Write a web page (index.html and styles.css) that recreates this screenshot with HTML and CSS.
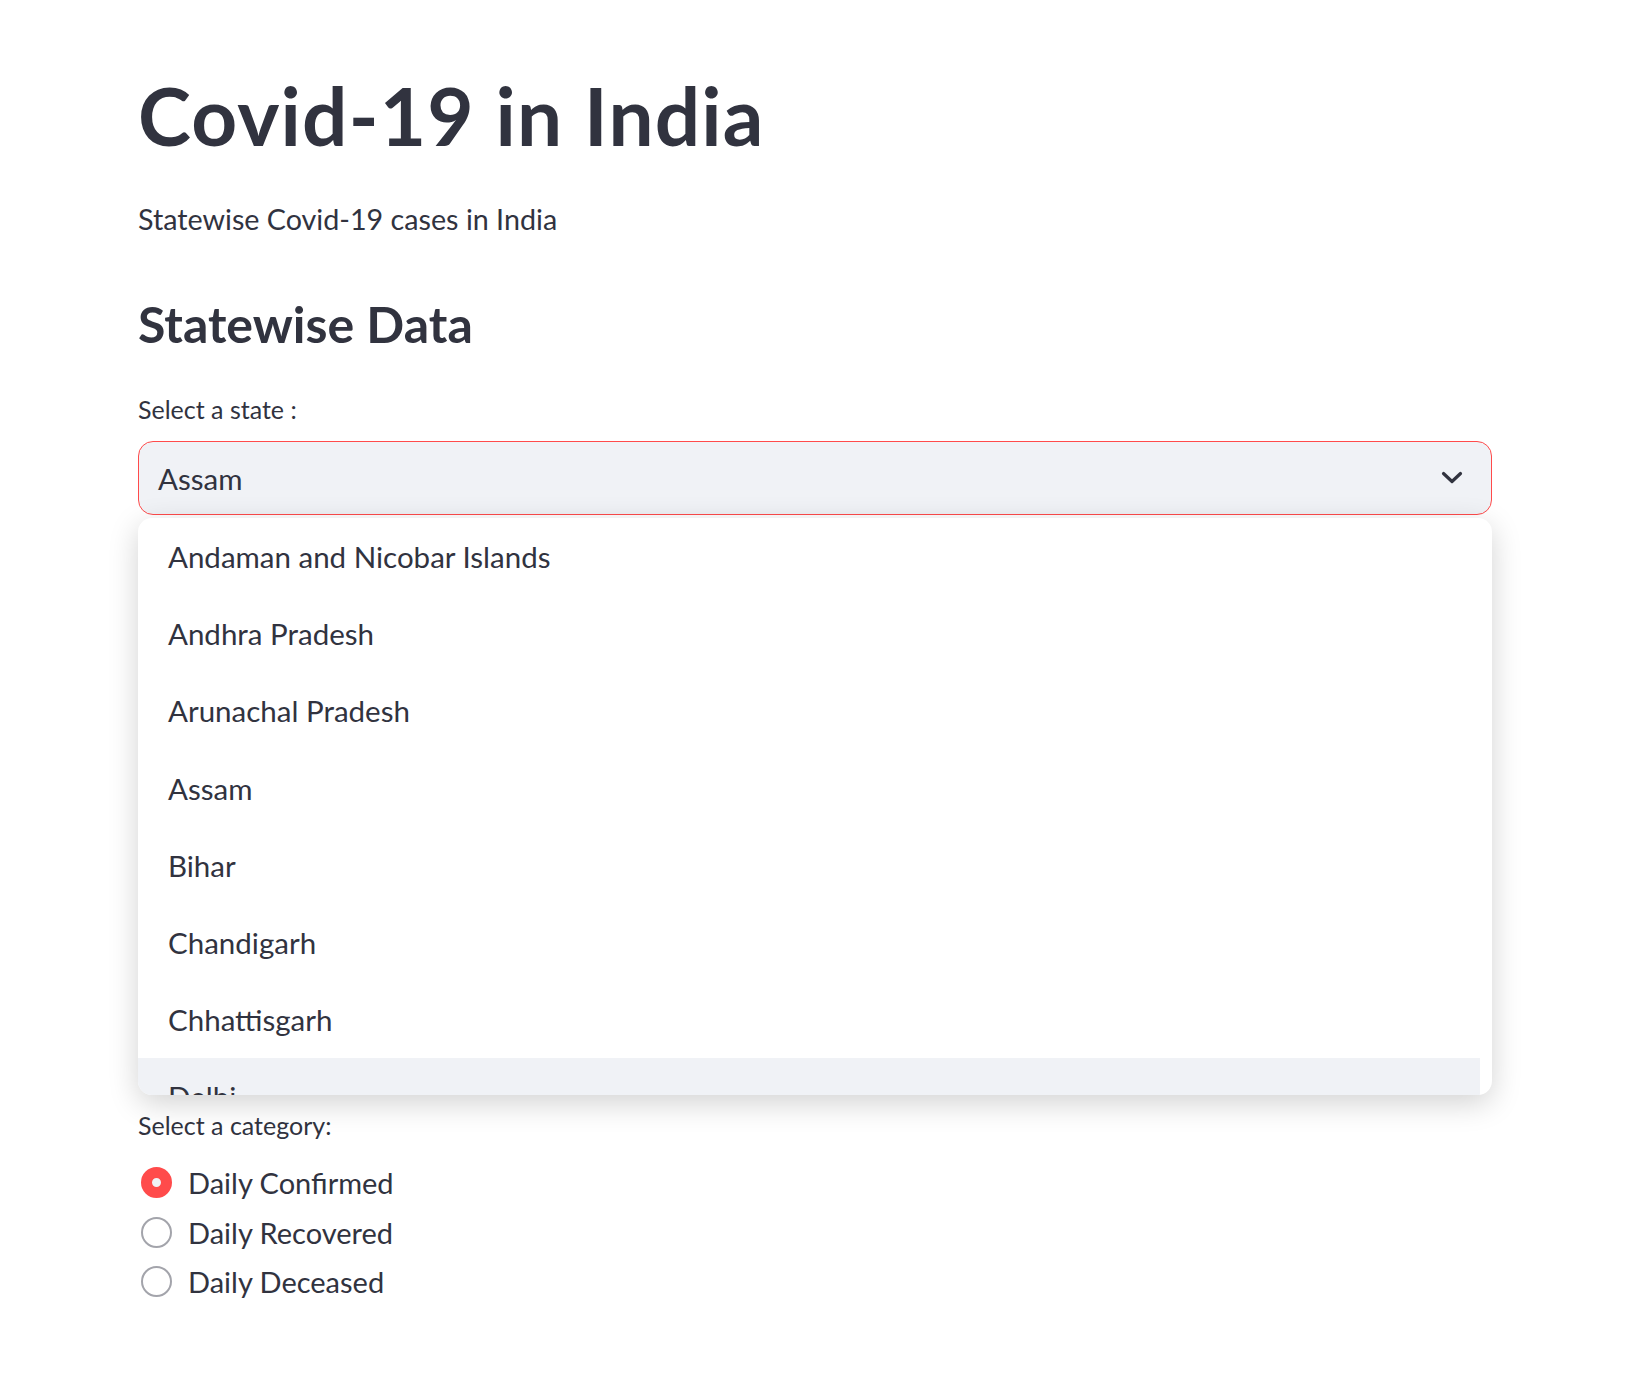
FILE: index.html
```html
<!DOCTYPE html>
<html lang="en">
<head>
<meta charset="utf-8">
<title>Covid-19 in India</title>
<link rel="stylesheet" href="styles.css">
</head>
<body>
<main class="block">
  <h1 class="title">Covid-19 in India</h1>
  <p class="subtitle">Statewise Covid-19 cases in India</p>
  <h3 class="subheader">Statewise Data</h3>

  <div class="widget">
    <label class="wlabel">Select a state :</label>
    <div class="select-wrap">
      <div class="select">
        <span class="select-value">Assam</span>
        <svg class="chevron" width="24" height="14" viewBox="0 0 24 14"><path d="M3.5 2.5 L12 10.5 L20.5 2.5" fill="none" stroke="#31333f" stroke-width="3.2" stroke-linecap="round" stroke-linejoin="round"/></svg>
      </div>
      <div class="menu">
        <ul class="options">
          <li class="option">Andaman and Nicobar Islands</li>
          <li class="option">Andhra Pradesh</li>
          <li class="option">Arunachal Pradesh</li>
          <li class="option">Assam</li>
          <li class="option">Bihar</li>
          <li class="option">Chandigarh</li>
          <li class="option">Chhattisgarh</li>
          <li class="option option-hl">Delhi</li>
        </ul>
      </div>
    </div>
  </div>

  <div class="hidden-content"></div>

  <div class="widget">
    <label class="wlabel">Select a category:</label>
    <div class="radios">
      <div class="radio"><span class="dot dot-on"></span><span class="rtext">Daily Confirmed</span></div>
      <div class="radio"><span class="dot"></span><span class="rtext">Daily Recovered</span></div>
      <div class="radio"><span class="dot"></span><span class="rtext">Daily Deceased</span></div>
    </div>
  </div>
</main>
</body>
</html>
```

FILE: styles.css
```css
* { box-sizing: border-box; }
html, body { margin: 0; padding: 0; background: #ffffff; }
body {
  font-family: Lato, "Noto Sans", sans-serif;
  color: #31333f;
}
.block {
  width: 1354px;
  margin-left: 138px;
  padding-top: 68px;
  padding-bottom: 80px;
}
.title {
  margin: 0;
  font-size: 80px;
  line-height: 94px;
  font-weight: 700;
  letter-spacing: 1.2px;
}
.subtitle {
  margin: 37px 0 0 0;
  font-size: 28.7px;
  line-height: 40px;
  font-weight: 400;
}
.subheader {
  margin: 55px 0 0 0;
  font-size: 50px;
  line-height: 60px;
  font-weight: 700;
}
.widget { margin-top: 38px; }
.wlabel {
  display: block;
  font-size: 25px;
  line-height: 34px;
}
.select-wrap {
  position: relative;
  margin-top: 15px;
}
.select {
  height: 74px;
  background: #f0f2f6;
  border: 1px solid #ff4b4b;
  border-radius: 15px;
  display: flex;
  align-items: center;
  justify-content: space-between;
  padding: 0 27px 0 19px;
}
.select-value { font-size: 29.5px; }
.chevron { display: block; }
.menu {
  position: absolute;
  left: 0;
  right: 0;
  top: 77px;
  height: 577px;
  background: #ffffff;
  border-radius: 14px;
  overflow: hidden;
  box-shadow: 0 8px 30px rgba(0, 0, 0, 0.18);
  padding-right: 12px;
  z-index: 10;
}
.options {
  list-style: none;
  margin: 0;
  padding: 0;
}
.option {
  height: 77.2px;
  display: flex;
  align-items: center;
  padding-left: 30px;
  font-size: 29.5px;
}
.option-hl { background: #f0f2f6; }
.hidden-content { height: 555px; }
.radios {
  margin-top: 16px;
  display: flex;
  flex-direction: column;
}
.radio {
  height: 49.5px;
  display: flex;
  align-items: center;
}
.dot {
  width: 31px;
  height: 31px;
  border-radius: 50%;
  border: 2px solid #a3a4ab;
  background: #ffffff;
  margin-left: 3px;
  margin-right: 16px;
  flex: none;
}
.dot-on {
  border: 11px solid #ff4b4b;
  background: #f0f2f6;
}
.rtext { font-size: 29px; }
```
